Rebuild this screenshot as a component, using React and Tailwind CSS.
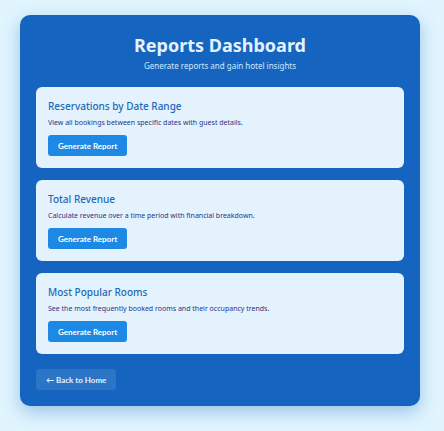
const reports = [
  {
    title: 'Reservations by Date Range',
    description: 'View all bookings between specific dates with guest details.',
  },
  {
    title: 'Total Revenue',
    description: 'Calculate revenue over a time period with financial breakdown.',
  },
  {
    title: 'Most Popular Rooms',
    description: 'See the most frequently booked rooms and their occupancy trends.',
  },
];

function ReportCard({ title, description }) {
  return (
    <section className="rounded-md bg-[#e3f2fd] p-3">
      <h2 className="text-[10px] leading-[14px] font-medium text-[#1f68b8]">{title}</h2>
      <p className="mt-1 text-[7px] leading-3 text-[#2c3584]">{description}</p>
      <button
        type="button"
        className="mt-1.5 block h-[21px] rounded-[3px] bg-[#1e88e5] px-[10px] font-['Lato',sans-serif] text-[8px] leading-3 font-bold text-white"
      >
        Generate Report
      </button>
    </section>
  );
}

export default function App() {
  return (
    <div className="min-h-screen bg-[#e1f5fe] py-[15px] pr-6 pl-5 font-['Noto_Sans','Open_Sans',sans-serif]">
      <main className="rounded-[10px] bg-[#1565c0] p-4 shadow-[0_6px_18px_rgba(21,101,192,0.35)]">
        <header className="pt-0.5 text-center">
          <h1 className="text-lg leading-6 font-bold text-[#e3f2fd]">Reports Dashboard</h1>
          <p className="mt-[3px] text-[8px] leading-3 text-[#d0e9fd]">
            Generate reports and gain hotel insights
          </p>
        </header>
        <div className="mt-[15px] flex flex-col gap-3">
          {reports.map((report) => (
            <ReportCard key={report.title} {...report} />
          ))}
        </div>
        <a
          href="#home"
          className="mt-[15px] flex h-[21px] w-fit items-center rounded-[3px] bg-white/10 px-[10px] font-['Lato','Noto_Sans',sans-serif] text-[8px] leading-3 font-bold text-[#e3f2fd]"
        >
          ← Back to Home
        </a>
      </main>
    </div>
  );
}
